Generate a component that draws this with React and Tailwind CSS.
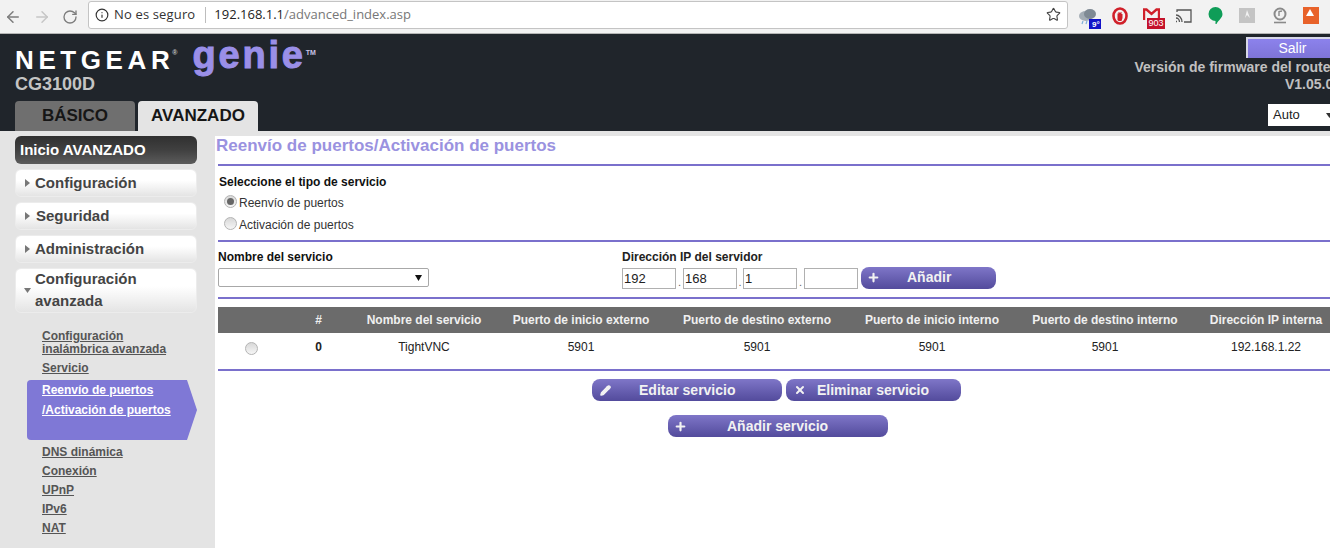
import React from "react";
import { ArrowLeft, ArrowRight, RotateCw, Info, Star, Plus, X, Pencil } from "lucide-react";

const F = "font-['Liberation_Sans',Arial,sans-serif]";

function Ext() {
  return (
    <div className="flex items-center h-[33px] relative w-[262px] shrink-0">
      <svg className="absolute left-[9px] top-[7px]" width="26" height="24" viewBox="0 0 26 24">
        <ellipse cx="9" cy="9" rx="7" ry="5" fill="#a4adb5" />
        <ellipse cx="13" cy="7" rx="6" ry="5" fill="#7f8a94" />
        <path d="M6 14l-1 3M10 14l-1 3" stroke="#7fb0d8" strokeWidth="1.2" />
        <rect x="12" y="12" width="12" height="10" fill="#1212c8" />
      </svg>
      <span className={`absolute left-[24px] top-[20px] text-[8px] leading-[9px] font-bold text-white ${F}`}>9°</span>
      <svg className="absolute left-[44px] top-[7px]" width="16" height="18" viewBox="0 0 16 18">
        <ellipse cx="8" cy="9" rx="6.500" ry="7.500" fill="none" stroke="#d0202a" strokeWidth="2.600" />
        <path d="M5.500 13V6.500h1V5h1v1h1V5h1v2h1v4l-1 3H6.500z" fill="#d0202a" />
      </svg>
      <svg className="absolute left-[75px] top-[8px]" width="17" height="12" viewBox="0 0 17 12">
        <path d="M1 12V1.500h2.500L8.500 6l5-4.500H16V12" fill="none" stroke="#d0202a" strokeWidth="2.400" />
      </svg>
      <span className={`absolute left-[79px] top-[18px] w-[18px] h-[11px] bg-[#c4122a] text-white text-[9px] leading-[11px] text-center ${F}`}>903</span>
      <svg className="absolute left-[107px] top-[9px]" width="17" height="14" viewBox="0 0 17 14" fill="none" stroke="#555" strokeWidth="1.300">
        <path d="M2 3V1h14v12H9" />
        <path d="M1 6c3 0 6 3 6 7M1 9c2 0 3.500 2 3.500 4M1 12.500h1" />
      </svg>
      <svg className="absolute left-[140px] top-[7px]" width="15" height="17" viewBox="0 0 15 17">
        <path d="M7.500 0a7 7 0 0 1 7 7c0 4-4 6-6 10l-1 0v-3a7 7 0 0 1 0-14z" fill="#0f9d58" />
      </svg>
      <svg className="absolute left-[171px] top-[8px]" width="16" height="15" viewBox="0 0 16 15">
        <rect width="16" height="15" fill="#c4c4c4" />
        <path d="M8 2l3 8-3-3-2 3z" fill="#f2f2f2" />
      </svg>
      <svg className="absolute left-[204px] top-[7px]" width="16" height="17" viewBox="0 0 16 17" fill="none" stroke="#8a8a8a">
        <circle cx="8" cy="7" r="5.500" strokeWidth="2" />
        <path d="M7 9V4.500l3-.5" strokeWidth="1.400" />
        <path d="M2 15.500h12" strokeWidth="1.600" />
      </svg>
      <svg className="absolute left-[235px] top-[7px]" width="16" height="17" viewBox="0 0 16 17">
        <rect width="16" height="17" fill="#e8622a" />
        <path d="M7 2l4 7H3z" fill="#fff" />
      </svg>
    </div>
  );
}

function Chrome() {
  return (
    <div className="h-[34px] bg-[#f2f2f2] border-b border-[#b5b5b5] flex items-center text-[#6f6f6f] overflow-hidden">
      <div className="w-[88px] shrink-0 flex items-center pl-[4px] gap-[11px]">
        <ArrowLeft size={18} strokeWidth={2} color="#7d7d7d" />
        <ArrowRight size={18} strokeWidth={2} color="#c6c6c6" />
        <RotateCw size={16} strokeWidth={2} color="#7d7d7d" />
      </div>
      <div className="w-[980px] shrink-0 h-[28px] -mt-[4px] bg-white border border-[#c4c4c4] rounded-[3px] flex items-center pl-[6px] pr-[6px] font-['Open_Sans',sans-serif] text-[13px]">
        <Info size={14} color="#333" strokeWidth={2} />
        <span className="ml-[5px] text-[#333] tracking-[0.150px]">No es seguro</span>
        <span className="ml-[10px] w-px h-[16px] bg-[#bdbdbd]" />
        <span className="ml-[8px] text-[#222]">192.168.1.1</span>
        <span className="text-[#777]">/advanced_index.asp</span>
        <Star size={15} color="#444" strokeWidth={1.800} className="ml-auto" />
      </div>
      <Ext />
    </div>
  );
}

function Header() {
  return (
    <div className={`h-[97px] bg-[#20252b] flex justify-between overflow-hidden ${F}`}>
      <div className="pl-[15px] flex flex-col">
        <div className="flex items-start h-[44px]">
          <span className="text-white font-bold text-[26px] tracking-[4.600px] leading-[24px] mt-[14px]">NETGEAR</span>
          <span className="text-[#c8c8c8] text-[7px] font-bold -ml-[2px] mt-[14px]">®</span>
          <span className="text-[#9a8fe8] font-bold text-[38px] leading-[38px] ml-[15px] mt-[2px] tracking-[2.800px] [-webkit-text-stroke:1px_#9a8fe8]">genie</span>
          <span className="text-[#c8c4e8] text-[7px] font-bold mt-[14px]">TM</span>
        </div>
        <div className="text-[#c4c4c4] font-bold text-[18px] leading-[18px] -mt-[3px]">CG3100D</div>
        <div className="flex gap-[3px] mt-[8px]">
          <div className="w-[120px] h-[30px] bg-[#6f6f6f] rounded-t-[4px] text-center text-[#161616] font-bold text-[17px] leading-[29px]">BÁSICO</div>
          <div className="w-[120px] h-[30px] bg-[#e4e4e4] rounded-t-[4px] text-center text-[#161616] font-bold text-[17px] leading-[29px]">AVANZADO</div>
        </div>
      </div>
      <div className="flex flex-col items-end pt-[3px] -mr-[7px] relative">
        <div className="w-[91px] h-[21px] bg-gradient-to-b from-[#8c82ec] to-[#7e74d8] border-l-2 border-t-2 border-[#d8d8e8] text-white text-[14px] leading-[18px] text-center">Salir</div>
        <div className="text-[#c0c0c0] font-bold text-[14px] leading-[16px] mt-[1px] mr-[1px] whitespace-nowrap">Versión de firmware del router</div>
        <div className="text-[#c0c0c0] font-bold text-[14px] leading-[16px] mt-[1px] -mr-[4px]">V1.05.04</div>
        <div className="w-[74px] h-[22px] bg-white -mr-[5px] mt-[12px] text-[#222] text-[13px] leading-[22px] pl-[5px] self-end flex items-center">
          <span>Auto</span>
          <svg width="7" height="5" viewBox="0 0 7 5" className="ml-[26px]"><path d="M0 0h7L3.500 5z" fill="#333" /></svg>
        </div>
      </div>
    </div>
  );
}

function Pill({ children, className = "" }) {
  return (
    <div className={`w-[182px] mx-[15px] rounded-[6px] bg-gradient-to-b from-white from-40% to-[#e4e4e4] border border-[#ececec] text-[#444] font-bold text-[15px] flex items-center ${className}`}>
      {children}
    </div>
  );
}

function Tri({ down }) {
  return (
    <svg width="7" height="8" viewBox="0 0 7 8" className="ml-[8px] mr-[4px] shrink-0">
      {down ? <path d="M0 1h7L3.500 6z" fill="#777" /> : <path d="M1 0l5 4-5 4z" fill="#777" />}
    </svg>
  );
}

function SubLink({ children, className = "" }) {
  return <a className={`block underline text-[#555] text-[12px] leading-[13px] font-bold ${className}`}>{children}</a>;
}

function Sidebar() {
  return (
    <div className={`w-[215px] shrink-0 bg-[#e4e4e4] h-[412px] ${F}`}>
      <div className="w-[182px] h-[28px] mx-[15px] rounded-[6px] bg-gradient-to-b from-[#303030] via-[#404040] to-[#5c5c5c] text-white font-bold text-[15px] leading-[27px] pl-[5px]">Inicio AVANZADO</div>
      <div className="flex flex-col gap-[5px] mt-[5px]">
        <Pill className="h-[28px]"><Tri />Configuración</Pill>
        <Pill className="h-[28px]"><Tri /><span className="ml-[1px]">Seguridad</span></Pill>
        <Pill className="h-[28px]"><Tri />Administración</Pill>
        <Pill className="h-[45px] leading-[22px]"><Tri down /><span className="-mt-px">Configuración<br />avanzada</span></Pill>
      </div>
      <div className="pl-[42px] mt-[17px]">
        <SubLink>Configuración</SubLink>
        <SubLink>inalámbrica avanzada</SubLink>
        <SubLink className="mt-[6px]">Servicio</SubLink>
      </div>
      <div className="relative w-[170px] h-[60px] ml-[27px] mt-[5px]">
        <svg className="absolute inset-0" width="170" height="60" viewBox="0 0 170 60">
          <path d="M4 0H160L170 30L160 60H4Q0 60 0 56V4Q0 0 4 0Z" fill="#7f78d6" />
        </svg>
        <div className="relative pl-[15px] text-white font-bold text-[12px] leading-[20px] underline">Reenvío de puertos<br />/Activación de puertos</div>
      </div>
      <div className="pl-[42px] mt-[6px] flex flex-col gap-[6px]">
        <SubLink>DNS dinámica</SubLink>
        <SubLink>Conexión</SubLink>
        <SubLink>UPnP</SubLink>
        <SubLink>IPv6</SubLink>
        <SubLink>NAT</SubLink>
      </div>
    </div>
  );
}

function Radio({ on, className = "" }) {
  return (
    <span className={`w-[13px] h-[13px] rounded-full border border-[#b4b4b4] bg-gradient-to-b from-[#d8d8d8] to-[#f6f6f6] flex items-center justify-center shrink-0 ${className}`}>
      {on && <span className="w-[7px] h-[7px] rounded-full bg-[#666]" />}
    </span>
  );
}

function Line({ className = "" }) {
  return <div className={`h-[2px] bg-[#7a70cc] ml-[3px] ${className}`} />;
}

function Btn({ w, icon, label, labelClass = "" }) {
  return (
    <div className={`h-[22px] rounded-[8px] bg-gradient-to-b from-[#7f76c8] to-[#534b9c] text-[#f2f2f2] font-bold text-[14px] flex items-center ${w}`}>
      {icon}
      <span className={labelClass}>{label}</span>
    </div>
  );
}

const cols = "grid grid-cols-[67px_67px_144px_170px_182px_168px_178px_144px] w-[1120px]";

function IpBox({ v, w = "w-[54px]" }) {
  return <div className={`${w} h-[21px] bg-white border border-[#b0b0b0] text-[13px] leading-[19px] pl-[1px] text-[#222]`}>{v}</div>;
}

function Content() {
  return (
    <div className={`flex-1 min-w-0 overflow-hidden bg-white ${F}`}>
      <div className="text-[#9a92e0] font-bold text-[17px] leading-[20px] pl-[1px]">Reenvío de puertos/Activación de puertos</div>
      <Line className="mt-[8px]" />
      <div className="pl-[4px] mt-[9px] text-[12px] leading-[14px] text-[#111] font-bold">Seleccione el tipo de servicio</div>
      <div className="pl-[9px] mt-[7px] flex items-center gap-[2px] text-[12px] leading-[14px] text-[#333]"><Radio on className="-translate-y-[2px]" /><span>Reenvío de puertos</span></div>
      <div className="pl-[9px] mt-[8px] flex items-center gap-[2px] text-[12px] leading-[14px] text-[#333]"><Radio className="-translate-y-[2px]" /><span>Activación de puertos</span></div>
      <Line className="mt-[8px]" />
      <div className="flex mt-[8px] pl-[3px] h-[47px]">
        <div className="w-[404px]">
          <div className="text-[12px] leading-[14px] font-bold text-[#111]">Nombre del servicio</div>
          <div className="mt-[4px] w-[211px] h-[19px] bg-white border border-[#a8a8a8] rounded-[2px] flex items-center justify-end pr-[6px]">
            <svg width="7" height="6" viewBox="0 0 7 6"><path d="M0 0h7L3.500 6z" fill="#111" /></svg>
          </div>
        </div>
        <div>
          <div className="text-[12px] leading-[14px] text-[#222] font-bold">Dirección IP del servidor</div>
          <div className="flex items-center mt-[4px] text-[#666] text-[11px]">
            <IpBox v="192" /><span className="w-[7px] text-center self-end leading-[14px]">.</span>
            <IpBox v="168" /><span className="w-[6px] text-center self-end leading-[14px]">.</span>
            <IpBox v="1" /><span className="w-[7px] text-center self-end leading-[14px]">.</span>
            <IpBox v="" />
            <div className="ml-[3px] -mt-[2px]">
              <Btn w="w-[135px]" icon={<Plus size={13} strokeWidth={4} className="ml-[6px]" />} label="Añadir" labelClass="ml-[27px]" />
            </div>
          </div>
        </div>
      </div>
      <Line />
      <div className={`${cols} ml-[3px] mt-[8px] h-[26px] bg-[#6b6b6b] text-[#f0f0f0] font-bold text-[12px] leading-[26px] text-center whitespace-nowrap`}>
        <div />
        <div>#</div>
        <div>Nombre del servicio</div>
        <div>Puerto de inicio externo</div>
        <div>Puerto de destino externo</div>
        <div>Puerto de inicio interno</div>
        <div>Puerto de destino interno</div>
        <div>Dirección IP interna</div>
      </div>
      <div className={`${cols} ml-[3px] h-[36px] text-[#222] text-[12px] leading-[29px] text-center`}>
        <div className="flex justify-center pt-[9px]"><Radio /></div>
        <div className="font-bold">0</div>
        <div>TightVNC</div>
        <div>5901</div>
        <div>5901</div>
        <div>5901</div>
        <div>5901</div>
        <div>192.168.1.22</div>
      </div>
      <Line />
      <div className="flex justify-center gap-[4px] mt-[8px] w-[1123px]">
        <Btn w="w-[190px]" icon={<Pencil size={11} strokeWidth={3} fill="currentColor" className="ml-[8px]" />} label="Editar servicio" labelClass="ml-[28px]" />
        <Btn w="w-[175px]" icon={<X size={12} strokeWidth={4} className="ml-[8px]" />} label="Eliminar servicio" labelClass="ml-[11px]" />
      </div>
      <div className="flex justify-center mt-[14px] w-[1126px]">
        <Btn w="w-[220px]" icon={<Plus size={13} strokeWidth={4} className="ml-[6px]" />} label="Añadir servicio" labelClass="ml-[40px]" />
      </div>
    </div>
  );
}

export default function App() {
  return (
    <div className="w-[1330px] h-[548px] overflow-hidden bg-white">
      <Chrome />
      <Header />
      <div className="flex flex-col">
        <div className="h-[5px] bg-[#e4e4e4]" />
        <div className="flex">
          <Sidebar />
          <Content />
        </div>
      </div>
    </div>
  );
}
